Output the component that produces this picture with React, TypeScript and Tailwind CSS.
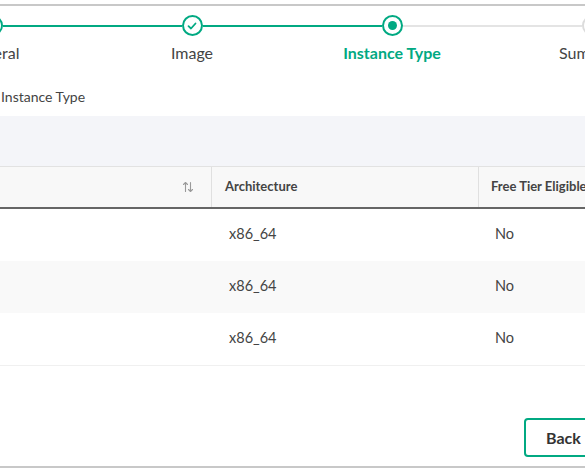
import React from "react";

const GREEN = "#01a982";

function Step({
  label,
  state,
  leftColor,
  rightColor,
}: {
  label: string;
  state: "done" | "current" | "todo";
  leftColor: string;
  rightColor: string;
}) {
  return (
    <div className="flex w-[200px] shrink-0 flex-col items-center">
      <div className="flex w-full items-center">
        <div className="h-[2px] flex-1" style={{ background: leftColor }} />
        {state === "done" && (
          <div className="flex h-[21px] w-[21px] items-center justify-center rounded-full border-2 border-[#01a982] bg-white">
            <svg width="10" height="8" viewBox="0 0 10 8" fill="none">
              <path d="M1.5 4.2 L4 6.5 L8.5 1.5" stroke={GREEN} strokeWidth="1.8" strokeLinecap="round" strokeLinejoin="round" />
            </svg>
          </div>
        )}
        {state === "current" && (
          <div className="flex h-[21px] w-[21px] items-center justify-center rounded-full border-2 border-[#01a982] bg-white">
            <div className="h-[9px] w-[9px] rounded-full bg-[#01a982]" />
          </div>
        )}
        {state === "todo" && (
          <div className="h-[21px] w-[21px] rounded-full border-2 border-[#dcdcdc] bg-white" />
        )}
        <div className="h-[2px] flex-1" style={{ background: rightColor }} />
      </div>
      <div
        className={
          state === "current"
            ? "mt-[5px] whitespace-nowrap text-[16px] leading-[24px] font-bold text-[#01a982]"
            : "mt-[5px] whitespace-nowrap text-[16px] leading-[24px] text-[#444444]"
        }
      >
        {label}
      </div>
    </div>
  );
}

function SortIcon() {
  return (
    <svg width="12" height="12" viewBox="0 0 12 12" fill="none" stroke="#9a9a9a" strokeWidth="1.1" strokeLinecap="round" strokeLinejoin="round">
      <path d="M3.5 10.5 V1.5 M1.5 3.5 L3.5 1.5 L5.5 3.5" />
      <path d="M8.5 1.5 V10.5 M6.5 8.5 L8.5 10.5 L10.5 8.5" />
    </svg>
  );
}

const rows = [
  { arch: "x86_64", free: "No" },
  { arch: "x86_64", free: "No" },
  { arch: "x86_64", free: "No" },
];

export default function App() {
  return (
    <div className="relative h-[473px] w-[585px] overflow-hidden bg-white font-['Lato',sans-serif] text-[#444444]">
      <div className="h-[4px]" />
      <div className="h-[2px] bg-[#c8c8c8]" />

      {/* stepper */}
      <div className="mt-[9px] ml-[-108px] flex w-[800px]">
        <Step label="General" state="done" leftColor="transparent" rightColor={GREEN} />
        <Step label="Image" state="done" leftColor={GREEN} rightColor={GREEN} />
        <Step label="Instance Type" state="current" leftColor={GREEN} rightColor="#e4e4e4" />
        <Step label="Summary" state="todo" leftColor="#e4e4e4" rightColor="transparent" />
      </div>

      {/* section label */}
      <div className="mt-[22px] pl-[1px] text-[14px] leading-[20px] text-[#444444]">Instance Type</div>

      {/* toolbar area */}
      <div className="mt-[9px] h-[50px] bg-[#f4f5f9]" />

      {/* table */}
      <div className="border-t border-[#e2e2e2]">
        <div className="flex h-[42px] border-b-2 border-[#666666] bg-[#f8f8f8] text-[13px] font-bold text-[#444444]">
          <div className="flex w-[212px] shrink-0 items-center justify-end border-r border-[#e0e0e0] pr-[17px]">
            <SortIcon />
          </div>
          <div className="flex w-[267px] shrink-0 items-center border-r border-[#e0e0e0] pl-[13px]">Architecture</div>
          <div className="flex w-[200px] shrink-0 items-center whitespace-nowrap pl-[12px]">Free Tier Eligible</div>
        </div>
        {rows.map((r, i) => (
          <div
            key={i}
            className={
              i % 2 === 1
                ? "flex h-[52px] items-center bg-[#f9f9f9] pb-[3px] text-[14.5px]"
                : "flex h-[52px] items-center bg-white pb-[3px] text-[14.5px]"
            }
          >
            <div className="w-[212px] shrink-0" />
            <div className="w-[267px] shrink-0 pl-[17px]">{r.arch}</div>
            <div className="w-[200px] shrink-0 pl-[16px]">{r.free}</div>
          </div>
        ))}
        <div className="h-px bg-[#f0f0f0]" />
      </div>

      {/* footer */}
      <div className="mt-[52px] flex pl-[524px]">
        <button className="h-[39px] w-[100px] shrink-0 rounded-[4px] border-2 border-[#01a982] bg-white pl-[20px] text-left text-[16px] font-bold text-[#333333]">
          Back
        </button>
      </div>
      <div className="mt-[9px] h-[2px] bg-[#c8c8c8]" />
    </div>
  );
}
